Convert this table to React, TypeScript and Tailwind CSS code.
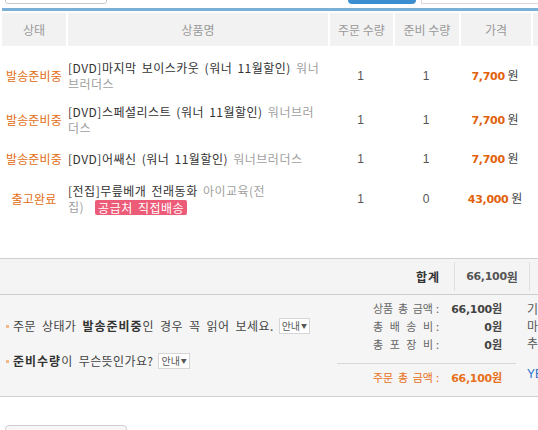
import React from "react";

const G = ({ children }: { children: React.ReactNode }) => (
  <span className="text-[#a0a0a0]">{children}</span>
);

type Row = {
  status: string;
  h: string;
  l1: React.ReactNode;
  l2?: React.ReactNode;
  q1: string;
  q2: string;
  price: string;
};

const rows: Row[] = [
  {
    status: "발송준비중",
    h: "h-[46px]",
    l1: (
      <>
        [DVD]마지막 보이스카웃 (워너 11월할인) <G>워너</G>
      </>
    ),
    l2: <G>브러더스</G>,
    q1: "1",
    q2: "1",
    price: "7,700",
  },
  {
    status: "발송준비중",
    h: "h-[42px]",
    l1: (
      <>
        [DVD]스페셜리스트 (워너 11월할인) <G>워너브러</G>
      </>
    ),
    l2: <G>더스</G>,
    q1: "1",
    q2: "1",
    price: "7,700",
  },
  {
    status: "발송준비중",
    h: "h-[36px]",
    l1: (
      <>
        [DVD]어쌔신 (워너 11월할인) <G>워너브러더스</G>
      </>
    ),
    q1: "1",
    q2: "1",
    price: "7,700",
  },
  {
    status: "출고완료",
    h: "h-[44px]",
    l1: (
      <>
        [전집]무릎베개 전래동화 <G>아이교육(전</G>
      </>
    ),
    l2: (
      <span className="flex items-center">
        <G>집)</G>
        <span className="ml-[11px] rounded-[2px] bg-[#ec5b78] px-[3px] leading-[15px] text-white">
          공급처 직접배송
        </span>
      </span>
    ),
    q1: "1",
    q2: "0",
    price: "43,000",
  },
];

const Label = ({ chars }: { chars: string[] }) => (
  <span className="flex w-[60px] justify-between">
    {chars.map((c, i) => (
      <span key={i}>{c}</span>
    ))}
  </span>
);

const Guide = () => (
  <span className="ml-[5px] inline-flex h-[16px] items-center border border-[#d6d6d6] bg-white px-[2px] text-[10px] leading-[14px] tracking-normal text-[#555] [word-spacing:0px]">
    안내<span className="ml-[1px] text-[6px]">▼</span>
  </span>
);

export default function App() {
  return (
    <div className="h-[430px] w-[538px] overflow-hidden bg-white font-['Noto_Sans_CJK_KR',sans-serif] text-[12px] leading-[16px] text-[#333]">
      {/* partial top controls */}
      <div className="flex h-[4px] items-end overflow-hidden">
        <div className="ml-[5px] h-[20px] w-[102px] shrink-0 rounded-[3px] border border-[#c9c9c9] bg-white" />
        <div className="ml-[241px] h-[20px] w-[68px] shrink-0 rounded-[4px] bg-[#3b8ed0]" />
        <div className="ml-[5px] h-[20px] w-[130px] shrink-0 border border-[#e2d6d6] bg-white" />
      </div>

      {/* table */}
      <div className="ml-[2px] mt-[4px] h-[3px] bg-[#7aafd8]" />
      <div className="ml-[2px] mt-[2px] flex h-[33px] items-center bg-[#f2f2f2] text-[#9a9a9a]">
        <div className="flex h-full w-[64px] shrink-0 items-center justify-center">상태</div>
        <div className="flex h-full w-[262px] shrink-0 items-center justify-center border-l-2 border-white">상품명</div>
        <div className="flex h-full w-[65px] shrink-0 items-center justify-center border-l-2 border-white">주문 수량</div>
        <div className="flex h-full w-[66px] shrink-0 items-center justify-center border-l-2 border-white">준비 수량</div>
        <div className="flex h-full w-[72px] shrink-0 items-center justify-center border-l-2 border-white">가격</div>
        <div className="h-full flex-1 border-l-2 border-white" />
      </div>

      <div className="ml-[2px] h-[212px] pt-[7px]">
        {rows.map((r, i) => (
          <div key={i} className={`flex items-center ${r.h}`}>
            <div className="w-[64px] shrink-0 text-center tracking-[0.2px] text-[#e36c12]">{r.status}</div>
            <div className="w-[262px] shrink-0 whitespace-nowrap pl-[2px] tracking-[0.5px] [word-spacing:2px]">
              <div>{r.l1}</div>
              {r.l2 && <div>{r.l2}</div>}
            </div>
            <div className="w-[65px] shrink-0 text-center font-['Liberation_Sans',sans-serif] text-[#555]">{r.q1}</div>
            <div className="w-[66px] shrink-0 text-center font-['Liberation_Sans',sans-serif] text-[#555]">{r.q2}</div>
            <div className="w-[72px] shrink-0 whitespace-nowrap text-center">
              <span className="font-['DejaVu_Sans',sans-serif] text-[11px] font-bold tracking-[-0.3px] text-[#e2620c]">
                {r.price}
              </span>
              <span className="text-[#444]"> 원</span>
            </div>
          </div>
        ))}
      </div>

      {/* total row */}
      <div className="flex h-[37px] items-center border-y border-[#cfcfcf] bg-[#f4f4f4]">
        <div className="w-[440px] shrink-0 text-right font-bold tracking-[1px] text-[#333]">합계</div>
        <div className="ml-[14px] flex h-[29px] w-[75px] shrink-0 items-center justify-center border-l border-[#e0e0e0] font-bold text-[#555]">
          <span className="font-['DejaVu_Sans',sans-serif] text-[11px] tracking-[-0.3px]">66,100</span>원
        </div>
        <div className="h-[29px] flex-1 border-l border-[#e0e0e0]" />
      </div>

      {/* notes & summary */}
      <div className="flex h-[102px] border-b border-[#cfcfcf] bg-[#f5f5f5]">
        <div className="flex w-[337px] shrink-0 flex-col gap-[19px] pl-[6px] pt-[23px] tracking-[0.4px] text-[#444] [word-spacing:3px]">
          <div className="flex items-center whitespace-nowrap">
            <span className="mr-[4px] h-[3px] w-[3px] bg-[#f3b98b]" />
            주문 상태가&nbsp;<b className="tracking-[1px] text-[#333]">발송준비중</b>인 경우 꼭 읽어 보세요.
            <Guide />
          </div>
          <div className="flex items-center whitespace-nowrap">
            <span className="mr-[4px] h-[3px] w-[3px] bg-[#f3b98b]" />
            <b className="tracking-[1px] text-[#333]">준비수량</b>이 무슨뜻인가요?
            <Guide />
          </div>
        </div>
        <div className="flex flex-1 pt-[5px] text-[11px] leading-[17px]">
          <div className="w-[179px] shrink-0">
            <div className="pl-[36px] text-[#666]">
              <div className="flex">
                <Label chars={["상품", "총", "금액"]} />
                <span className="ml-[3px]">:</span>
                <span className="ml-auto mr-[14px] font-bold text-[#444]">
                  <span className="font-['DejaVu_Sans',sans-serif] tracking-[-0.3px]">66,100</span>원
                </span>
              </div>
              <div className="flex">
                <Label chars={["총", "배", "송", "비"]} />
                <span className="ml-[3px]">:</span>
                <span className="ml-auto mr-[14px] font-bold text-[#444]">
                  <span className="font-['DejaVu_Sans',sans-serif]">0</span>원
                </span>
              </div>
              <div className="flex">
                <Label chars={["총", "포", "장", "비"]} />
                <span className="ml-[3px]">:</span>
                <span className="ml-auto mr-[14px] font-bold text-[#444]">
                  <span className="font-['DejaVu_Sans',sans-serif]">0</span>원
                </span>
              </div>
            </div>
            <div className="mt-[9px] border-t border-[#d8d8d8] pl-[36px] pt-[5px] text-[#e8701a]">
              <div className="flex">
                <Label chars={["주문", "총", "금액"]} />
                <span className="ml-[3px]">:</span>
                <span className="ml-auto mr-[14px] font-bold">
                  <span className="font-['DejaVu_Sans',sans-serif] tracking-[-0.3px]">66,100</span>원
                </span>
              </div>
            </div>
          </div>
          <div className="ml-[11px] whitespace-nowrap text-[12px] text-[#555]">
            <div className="h-[17px]">기</div>
            <div className="h-[17px]">마</div>
            <div className="h-[17px]">추</div>
            <div className="mt-[15px] font-['Liberation_Sans',sans-serif] text-[#2b6fd0]">YES</div>
          </div>
        </div>
      </div>

      {/* partial bottom button */}
      <div className="ml-[5px] mt-[28px] h-[20px] w-[122px] rounded-[4px] border border-[#cfcfcf] bg-[#f7f7f7]" />
    </div>
  );
}
